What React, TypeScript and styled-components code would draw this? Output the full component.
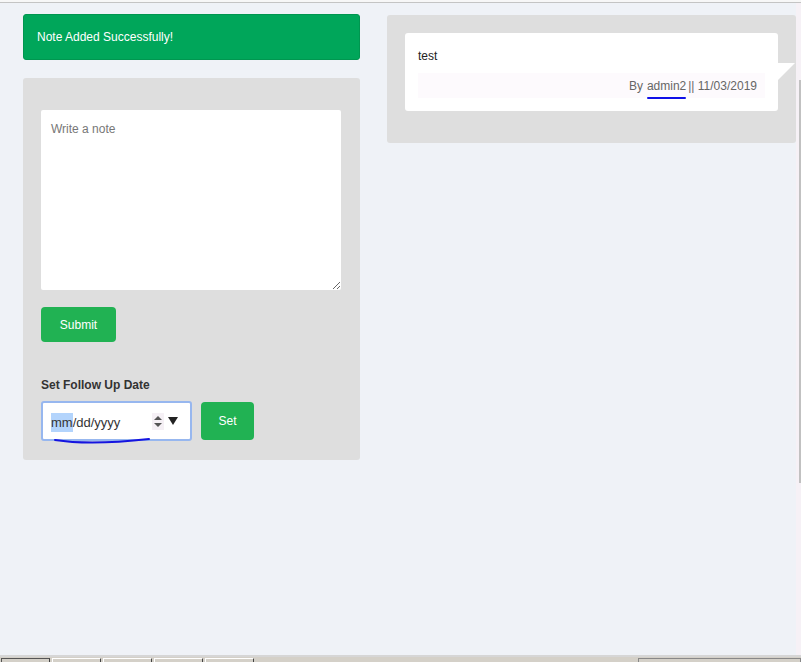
import React from "react";
import styled, { createGlobalStyle } from "styled-components";

const GlobalStyle = createGlobalStyle`
  html, body {
    margin: 0;
    padding: 0;
    height: 100%;
    overflow: hidden;
  }
  body {
    font-family: "Liberation Sans", Arial, sans-serif;
    font-size: 12px;
    color: #333;
    background: #eff2f7;
  }
`;

const Page = styled.div`
  display: flex;
  flex-direction: column;
  height: 662px;
`;

const TopLine = styled.div`
  height: 2px;
  background: #f7f7f7;
  border-bottom: 1px solid #c4c4c4;
`;

const Main = styled.div`
  flex: 1;
  display: flex;
  min-height: 0;
  border-bottom: 2px solid #d6d6d6;
`;

const Content = styled.div`
  flex: 1;
  display: grid;
  grid-template-columns: 337px 409px;
  column-gap: 27px;
  align-items: start;
  padding: 11px 0 0 23px;
`;

const Column = styled.div`
  display: flex;
  flex-direction: column;
`;

const Alert = styled.div`
  height: 46px;
  box-sizing: border-box;
  display: flex;
  align-items: center;
  padding: 0 13px;
  background: #00a65a;
  border: 1px solid #009650;
  border-radius: 3px;
  color: #fff;
  font-size: 12px;
  margin-bottom: 18px;
`;

const Panel = styled.div<{ $pad: string; $top?: number }>`
  background: #dedede;
  border-radius: 3px;
  padding: ${(p) => p.$pad};
  margin-top: ${(p) => p.$top ?? 0}px;
`;

const NoteArea = styled.textarea`
  display: block;
  width: 300px;
  height: 180px;
  box-sizing: border-box;
  border: none;
  border-radius: 2px;
  padding: 12px 10px;
  font-family: inherit;
  font-size: 12px;
  color: #333;
  background: #fff;
  resize: vertical;
  outline: none;
  &::placeholder {
    color: #777;
  }
`;

const GreenButton = styled.button<{ $w: number; $h: number }>`
  width: ${(p) => p.$w}px;
  height: ${(p) => p.$h}px;
  border: none;
  border-radius: 4px;
  background: #21b253;
  color: #fff;
  font-family: inherit;
  font-size: 12px;
  cursor: pointer;
`;

const SubmitRow = styled.div`
  margin-top: 17px;
`;

const FieldLabel = styled.div`
  margin-top: 36px;
  font-weight: bold;
  font-size: 12px;
  color: #333;
  line-height: 14px;
`;

const DateRow = styled.div`
  display: flex;
  align-items: center;
  gap: 9px;
  margin-top: 9px;
`;

const DateBox = styled.div`
  position: relative;
  width: 151px;
  height: 40px;
  box-sizing: border-box;
  border: 2px solid #97b7ef;
  border-radius: 3px;
  background: #fff;
  display: flex;
  align-items: center;
  padding-left: 8px;
  font-size: 13px;
  color: #333;
`;

const Selected = styled.span`
  background: #b3d4fc;
  padding: 2px 0;
`;

const DateText = styled.span`
  flex: 1;
  padding-top: 2px;
`;

const Spinner = styled.div`
  width: 12px;
  height: 17px;
  background: #f5f0f5;
  display: flex;
  flex-direction: column;
  align-items: center;
  justify-content: center;
  gap: 3px;
  margin-right: 4px;
`;

const Caret = styled.div<{ $up?: boolean }>`
  width: 0;
  height: 0;
  border-left: 4px solid transparent;
  border-right: 4px solid transparent;
  ${(p) =>
    p.$up
      ? "border-bottom: 4px solid #555;"
      : "border-top: 4px solid #555;"}
`;

const DropArrow = styled.div`
  width: 0;
  height: 0;
  border-left: 5px solid transparent;
  border-right: 5px solid transparent;
  border-top: 8px solid #222;
  margin-right: 12px;
`;

const Scribble = styled.svg`
  position: absolute;
  left: 11px;
  top: 36px;
  overflow: visible;
`;

const NoteCard = styled.div`
  position: relative;
  background: #fff;
  border-radius: 3px;
  padding: 16px 13px 13px;
  &::after {
    content: "";
    position: absolute;
    left: 100%;
    top: 30px;
    border-top: 17px solid #fff;
    border-right: 17px solid transparent;
  }
`;

const NoteText = styled.div`
  font-size: 12px;
  color: #222;
  line-height: 14px;
  margin-bottom: 10px;
`;

const NoteMeta = styled.div`
  height: 25px;
  background: #fdfafd;
  display: flex;
  align-items: center;
  justify-content: flex-end;
  padding-right: 8px;
  color: #666;
  font-size: 12px;
`;

const Author = styled.span`
  position: relative;
  margin-left: 4px;
  margin-right: 2px;
  &::after {
    content: "";
    position: absolute;
    left: 0;
    right: 0;
    bottom: -6px;
    height: 2px;
    border-radius: 1px;
    background: #1010e8;
  }
`;

const Scrollbar = styled.div`
  width: 5px;
  background: #f6f1f6;
  position: relative;
`;

const Thumb = styled.div`
  position: absolute;
  right: 0;
  top: 77px;
  width: 2px;
  height: 403px;
  background: #c1c1c1;
`;

const Taskbar = styled.div`
  height: 5px;
  background: #d4d0c8;
  display: flex;
  align-items: flex-end;
  gap: 2px;
  padding-left: 1px;
`;

const Tab = styled.div<{ $active?: boolean }>`
  width: 47px;
  height: 3px;
  border: 1px solid ${(p) => (p.$active ? "#555" : "#fff")};
  border-bottom: none;
  border-right-color: #444;
`;

const TrayBox = styled.div`
  margin-left: auto;
  width: 161px;
  height: 3px;
  border: 1px solid #888;
  border-bottom: none;
`;

export default function App() {
  return (
    <Page>
      <GlobalStyle />
      <TopLine />
      <Main>
        <Content>
          <Column>
            <Alert>Note Added Successfully!</Alert>
            <Panel $pad="32px 19px 19px 18px">
              <NoteArea placeholder="Write a note" />
              <SubmitRow>
                <GreenButton $w={75} $h={35}>Submit</GreenButton>
              </SubmitRow>
              <FieldLabel>Set Follow Up Date</FieldLabel>
              <DateRow>
                <DateBox>
                  <DateText>
                    <Selected>mm</Selected>/dd/yyyy
                  </DateText>
                  <Spinner>
                    <Caret $up />
                    <Caret />
                  </Spinner>
                  <DropArrow />
                  <Scribble width="96" height="6">
                    <path
                      d="M1 1 C 20 4, 50 5, 95 0"
                      stroke="#1414e0"
                      strokeWidth="2"
                      fill="none"
                      strokeLinecap="round"
                    />
                  </Scribble>
                </DateBox>
                <GreenButton $w={53} $h={38}>Set</GreenButton>
              </DateRow>
            </Panel>
          </Column>
          <Column>
            <Panel $pad="18px 18px 32px 18px" $top={1}>
              <NoteCard>
                <NoteText>test</NoteText>
                <NoteMeta>
                  By<Author>admin2</Author>|| 11/03/2019
                </NoteMeta>
              </NoteCard>
            </Panel>
          </Column>
        </Content>
        <Scrollbar>
          <Thumb />
        </Scrollbar>
      </Main>
      <Taskbar>
        <Tab $active />
        <Tab />
        <Tab />
        <Tab />
        <Tab />
        <TrayBox />
      </Taskbar>
    </Page>
  );
}
